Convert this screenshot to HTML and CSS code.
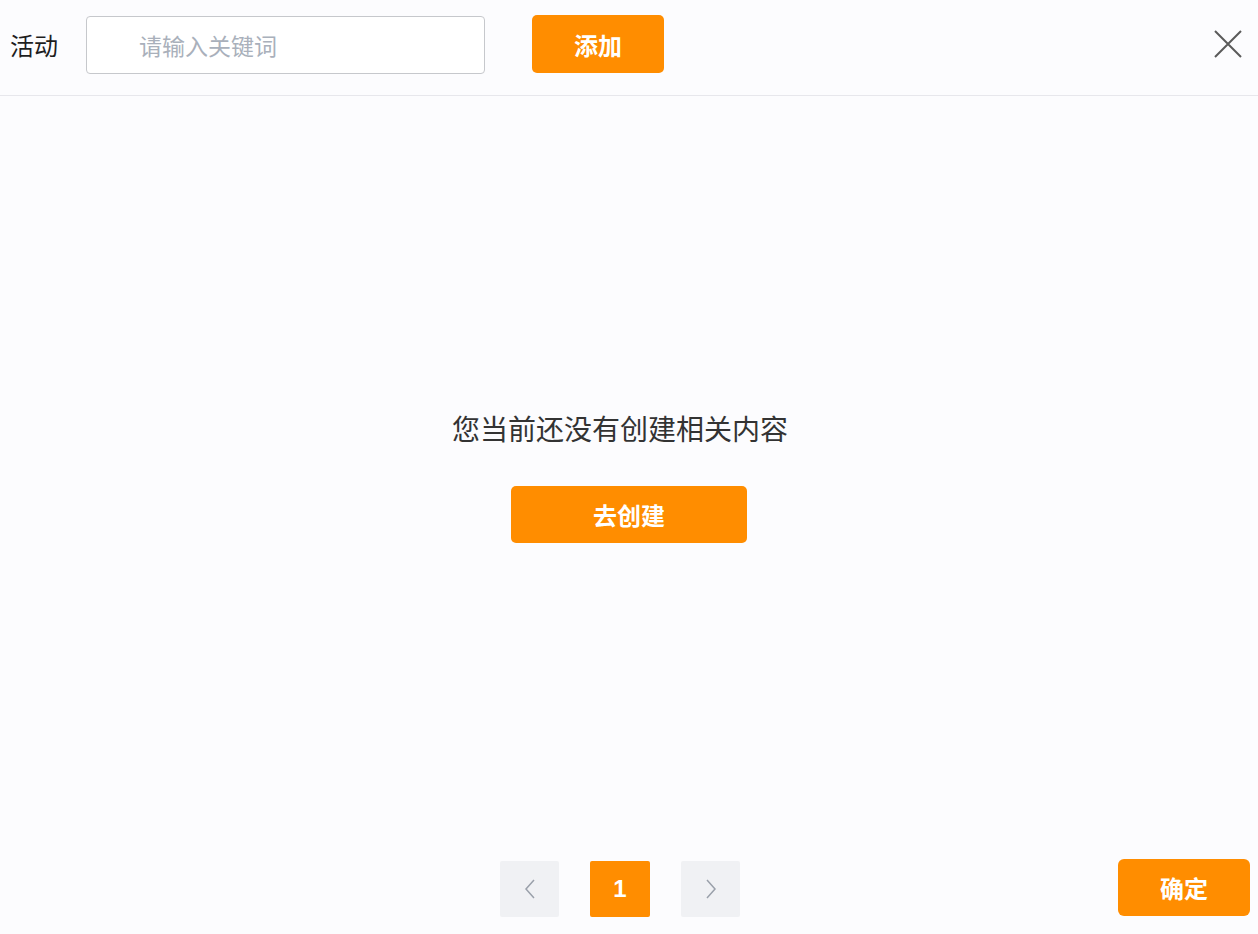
FILE: index.html
```html
<!DOCTYPE html>
<html lang="zh">
<head>
<meta charset="utf-8">
<link rel="stylesheet" href="styles.css">
</head>
<body>
<div class="page">
  <header class="header">
    <span class="label">活动</span>
    <input class="search" type="text" placeholder="请输入关键词">
    <button class="btn btn-add">添加</button>
    <button class="close" aria-label="关闭">
      <svg width="30" height="30" viewBox="0 0 30 30"><path d="M2 2 L28 28 M28 2 L2 28" stroke="#5a5a5a" stroke-width="2" fill="none"/></svg>
    </button>
  </header>
  <main class="main">
    <p class="empty-text">您当前还没有创建相关内容</p>
    <button class="btn btn-create">去创建</button>
  </main>
  <footer class="footer">
    <div class="pager">
      <button class="pg pg-nav" aria-label="上一页">
        <svg width="12" height="20" viewBox="0 0 12 20"><path d="M10 1 L2 10 L10 19" stroke="#9aa0aa" stroke-width="1.5" fill="none"/></svg>
      </button>
      <button class="pg pg-active">1</button>
      <button class="pg pg-nav" aria-label="下一页">
        <svg width="12" height="20" viewBox="0 0 12 20"><path d="M2 1 L10 10 L2 19" stroke="#9aa0aa" stroke-width="1.5" fill="none"/></svg>
      </button>
    </div>
    <button class="btn btn-ok">确定</button>
  </footer>
</div>
</body>
</html>
```
FILE: styles.css
```css
html, body {
  margin: 0;
  padding: 0;
  background: #fcfcfe;
}
body {
  font-family: "Noto Sans CJK SC", "Liberation Sans", sans-serif;
  color: #222;
}
.page {
  width: 1258px;
  height: 934px;
  display: flex;
  flex-direction: column;
  overflow: hidden;
}
.header {
  height: 95px;
  border-bottom: 1px solid #e7e7ec;
  display: flex;
  align-items: flex-start;
  padding-left: 10px;
  box-sizing: content-box;
}
.label {
  font-size: 24px;
  color: #1e1e1e;
  line-height: 30px;
  margin-top: 30px;
}
.search {
  margin-left: 28px;
  margin-top: 16px;
  width: 399px;
  height: 58px;
  box-sizing: border-box;
  border: 1px solid #c6c8cc;
  border-radius: 4px;
  background: #fff;
  padding: 0 0 0 52px;
  font-family: inherit;
  font-size: 23px;
  color: #333;
  outline: none;
}
.search::placeholder {
  color: #a9b0bb;
}
.btn {
  border: none;
  background: #ff8d00;
  color: #fff;
  font-family: inherit;
  font-weight: 700;
  cursor: pointer;
  border-radius: 5px;
  padding: 0;
}
.btn-add {
  margin-left: 47px;
  margin-top: 15px;
  width: 132px;
  height: 58px;
  font-size: 24px;
}
.close {
  margin-left: auto;
  margin-right: 15px;
  margin-top: 29px;
  background: none;
  border: none;
  padding: 0;
  width: 30px;
  height: 30px;
  cursor: pointer;
}
.main {
  height: 764px;
  display: flex;
  flex-direction: column;
  align-items: center;
  padding-top: 312px;
  box-sizing: border-box;
}
.empty-text {
  margin: 0;
  font-size: 28px;
  line-height: 40px;
  color: #333;
  transform: translateX(-9px);
}
.btn-create {
  margin-top: 38px;
  width: 236px;
  height: 57px;
  font-size: 24px;
}
.footer {
  flex: 1;
  display: flex;
  align-items: flex-start;
  justify-content: center;
  position: relative;
}
.pager {
  display: flex;
  gap: 31px;
  margin-left: -18px;
  margin-top: 1px;
}
.pg {
  width: 59px;
  height: 56px;
  border: none;
  border-radius: 2px;
  padding: 0;
  display: flex;
  align-items: center;
  justify-content: center;
  cursor: pointer;
  font-family: "Liberation Sans", sans-serif;
}
.pg-nav {
  background: #f0f1f4;
}
.pg-active {
  background: #ff8d00;
  color: #fff;
  font-size: 24px;
  font-weight: 700;
  width: 60px;
}
.btn-ok {
  position: absolute;
  right: 8px;
  top: -1px;
  width: 132px;
  height: 57px;
  font-size: 24px;
  border-radius: 6px;
}
```
